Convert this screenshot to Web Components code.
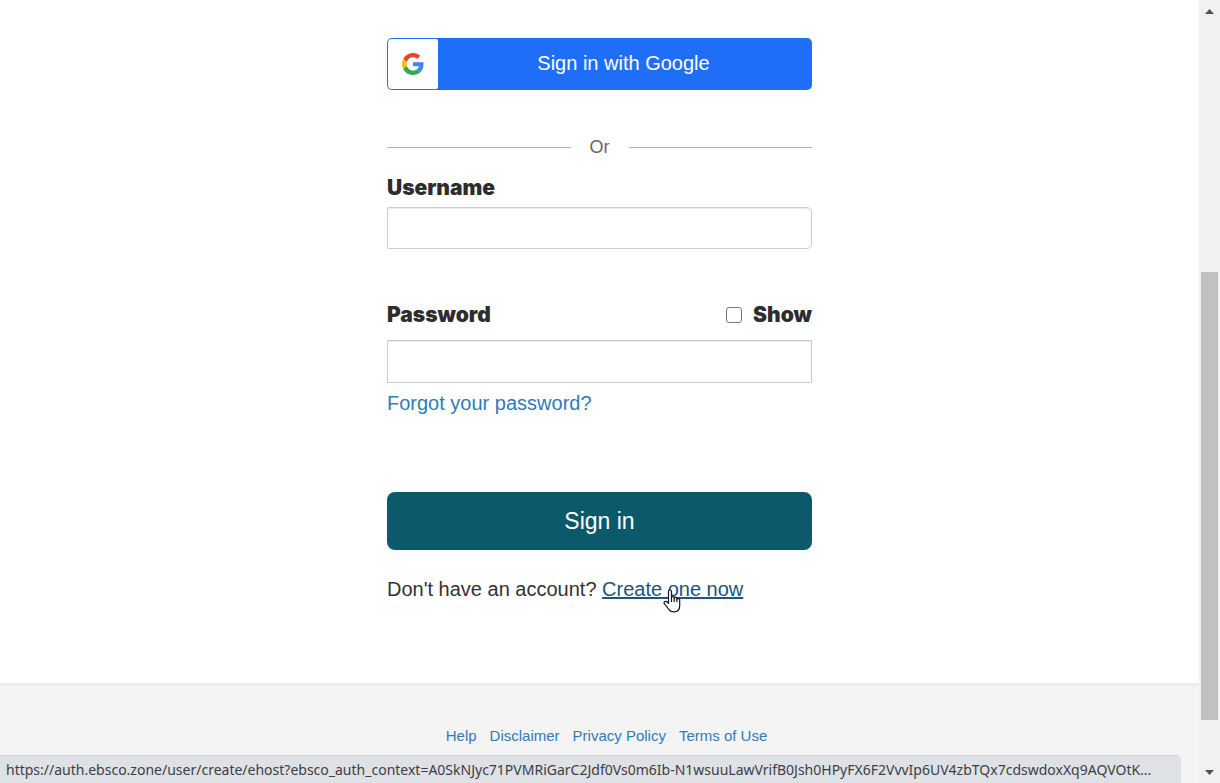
<!DOCTYPE html>
<html lang="en">
<head>
<meta charset="utf-8">
<title>Sign in</title>
<style>
  body { margin: 0; background: #fff; color: #333; font-family: "Liberation Sans", Arial, sans-serif; }
</style>
</head>
<body>
<app-shell>
  <sign-in-form></sign-in-form>
  <site-footer slot="footer"></site-footer>
  <link-status slot="status">https://auth.ebsco.zone/user/create/ehost?ebsco_auth_context=A0SkNJyc71PVMRiGarC2Jdf0Vs0m6Ib-N1wsuuLawVrifB0Jsh0HPyFX6F2VvvIp6UV4zbTQx7cdswdoxXq9AQVOtK...</link-status>
  <scroll-track slot="scroll"></scroll-track>
</app-shell>
<script>
function define(name, html, setup) {
  customElements.define(name, class extends HTMLElement {
    constructor() {
      super();
      const t = document.createElement('template');
      t.innerHTML = html;
      this.attachShadow({ mode: 'open' }).append(t.content.cloneNode(true));
      if (setup) setup(this);
    }
  });
}

define('app-shell', `
<style>
  :host { display: grid; grid-template-columns: minmax(0, 1fr) 21px; height: 100vh; position: relative; overflow: hidden; }
  .page { display: flex; flex-direction: column; min-width: 0; overflow: hidden; }
  main { padding: 38px 16px 82px; }
  .footer { flex: 1; display: grid; }
</style>
<div class="page"><main><slot></slot></main><div class="footer"><slot name="footer"></slot></div></div>
<slot name="scroll"></slot>
<slot name="status"></slot>`);

define('google-button', `
<style>
  :host { display: block; }
  button { box-sizing: border-box; display: flex; align-items: stretch; width: 100%; height: 52px; padding: 1px; border: 0; border-radius: 5px; background: #1f6ef7; color: #fff; font: 20px/48px "Liberation Sans", Arial, sans-serif; cursor: pointer; }
  .logo { display: grid; place-items: center; width: 50px; border-radius: 4px 2px 2px 4px; background: #fff; }
  .label { flex: 1; padding-right: 2px; }
</style>
<button type="button"><span class="logo"><svg width="22" height="22" viewBox="0 0 48 48" aria-hidden="true">
<path fill="#EA4335" d="M24 9.5c3.54 0 6.71 1.22 9.21 3.6l6.85-6.85C35.9 2.38 30.47 0 24 0 14.62 0 6.51 5.38 2.56 13.22l7.98 6.19C12.43 13.72 17.74 9.5 24 9.5z"/>
<path fill="#4285F4" d="M46.98 24.55c0-1.57-.15-3.09-.38-4.55H24v9.02h12.94c-.58 2.96-2.26 5.48-4.78 7.18l7.73 6c4.51-4.18 7.09-10.36 7.09-17.65z"/>
<path fill="#FBBC05" d="M10.53 28.59c-.48-1.45-.76-2.99-.76-4.59s.27-3.14.76-4.59l-7.98-6.19C.92 16.46 0 20.12 0 24c0 3.88.92 7.54 2.56 10.78l7.97-6.19z"/>
<path fill="#34A853" d="M24 48c6.48 0 11.93-2.13 15.89-5.81l-7.73-6c-2.15 1.45-4.92 2.3-8.16 2.3-6.26 0-11.57-4.22-13.47-9.91l-7.98 6.19C6.51 42.62 14.62 48 24 48z"/>
</svg></span><span class="label"><slot></slot></span></button>`);

define('or-divider', `
<style>
  :host { display: flex; align-items: center; gap: 19px; color: #666; font-size: 18px; line-height: 22px; }
  i { flex: 1; height: 1px; background: #b3b3b3; }
</style><i></i><slot></slot><i></i>`);

define('text-field', `
<style>
  :host { display: block; }
  .head { display: flex; justify-content: space-between; align-items: center; }
  label { color: #2d2d2d; font: 900 21px/24px Inter, "Liberation Sans", sans-serif; }
  input { box-sizing: border-box; display: block; width: 100%; height: 42px; margin: 7px 0 0; padding: 6px 12px; border: 1px solid #ccc; border-radius: 0 5px 5px 0; background: #fff; box-shadow: inset 0 1px 1px rgba(0,0,0,.08); font: 20px "Liberation Sans", Arial, sans-serif; outline: none; }
  :host([type="password"]) input { height: 43px; margin-top: 13px; border-radius: 0; }
</style>
<div class="head"><label for="field"></label><slot name="action"></slot></div>
<input id="field">`, host => {
  host.shadowRoot.querySelector('label').textContent = host.getAttribute('label');
  host.shadowRoot.querySelector('input').type = host.getAttribute('type') || 'text';
});

define('show-toggle', `
<style>
  :host { display: block; }
  label { display: flex; align-items: center; gap: 11px; color: #2d2d2d; font: 900 21px/24px Inter, "Liberation Sans", sans-serif; }
  input { appearance: none; box-sizing: border-box; width: 16px; height: 16px; margin: 0; border: 1px solid #767676; border-radius: 3px; background: #fff; }
  input:checked { background: #0b596b; }
</style>
<label><input type="checkbox"><span><slot></slot></span></label>`);

define('hand-cursor', `
<style>:host { display: block; } svg { display: block; }</style>
<svg width="18" height="24" viewBox="0 0 18 24" aria-hidden="true"><path d="M5.5 14V2.4Q5.5 1 7 1t1.5 1.4V8.5Q8.6 7.4 9.8 7.4T11.200 8.700V9.500Q11.300 8.200 12.500 8.200T13.900 9.600V10.500Q14.100 9.300 15.300 9.300T16.700 10.800V16.500Q16.700 22.900 10.900 22.900 7.300 22.900 5.500 20L1 14.200Q.7 12.700 2.200 12.300 3.800 12.100 5.500 14.300Z" fill="#fff" stroke="#111122" stroke-width="1.200" stroke-linejoin="round"/><path d="M8.500 8v5M11.200 9v4M13.900 10v3" fill="none" stroke="#111122" stroke-width="1.200"/></svg>`);

define('sign-in-form', `
<style>
  :host { display: block; max-width: 425px; margin: 0 auto; }
  form { display: flex; flex-direction: column; }
  or-divider { margin: 46px 0 18px; }
  text-field + text-field { margin-top: 54px; }
  a { color: #337ab7; text-decoration: none; }
  .forgot { align-self: flex-start; margin-top: 8px; font-size: 20px; line-height: 24px; }
  .submit { height: 58px; margin-top: 77px; padding: 0; border: 0; border-radius: 8px; background: #0b596b; color: #fff; font: 23px/56px "Liberation Sans", Arial, sans-serif; cursor: pointer; }
  p { margin: 27px 0 0; font-size: 20px; line-height: 24px; }
  .create { position: relative; color: #23527c; text-decoration: underline; }
  hand-cursor { position: absolute; left: 61px; top: 11px; }
</style>
<form>
  <google-button>Sign in with Google</google-button>
  <or-divider>Or</or-divider>
  <text-field label="Username"></text-field>
  <text-field label="Password" type="password"><show-toggle slot="action">Show</show-toggle></text-field>
  <a class="forgot" href="#">Forgot your password?</a>
  <button class="submit" type="button">Sign in</button>
  <p>Don't have an account? <a class="create" href="#">Create one now<hand-cursor></hand-cursor></a></p>
</form>`);

define('site-footer', `
<style>
  :host { display: block; border-top: 3px solid #ececec; background: #f4f4f4; }
  nav { display: flex; justify-content: center; gap: 13px; padding: 40px 0 0 14px; font-size: 15px; line-height: 20px; }
  a { color: #337ab7; text-decoration: none; }
</style>
<nav><a href="#">Help</a><a href="#">Disclaimer</a><a href="#">Privacy Policy</a><a href="#">Terms of Use</a></nav>`);

define('link-status', `
<style>
  :host { position: absolute; left: 0; right: 39px; bottom: 0; box-sizing: border-box; height: 28px; padding: 0 6px; border-top: 1px solid #d2d4d7; border-radius: 0 5px 0 0; background: #dee1e6; color: #3c4043; font: 14px/27px "Noto Sans", "Open Sans", sans-serif; white-space: nowrap; overflow: hidden; }
</style><slot></slot>`);

define('scroll-track', `
<style>
  :host { display: flex; flex-direction: column; align-items: center; background: #f1f1f1; }
  svg { display: block; flex: none; width: 21px; height: 20px; }
  .rail { flex: 1; display: grid; grid-template-rows: 252fr 448fr 43fr; }
  .thumb { grid-row: 2; width: 17px; background: #c1c1c1; }
</style>
<svg viewBox="0 0 21 20"><path d="M6 14l4.500-5 4.500 5z" fill="#505050"/></svg>
<div class="rail"><div class="thumb"></div></div>
<svg viewBox="0 0 21 20"><path d="M6 7l4.500 5 4.500-5z" fill="#505050"/></svg>`);
</script>
</body>
</html>
